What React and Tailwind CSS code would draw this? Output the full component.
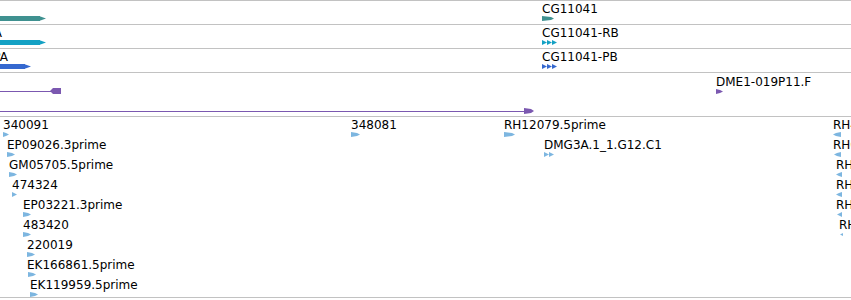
const TEAL = "#3f9190";
const CYAN = "#14a1c4";
const BLUE = "#3568cf";
const PURPLE = "#7b58b0";
const SKY = "#7db6e0";

function Bar({ width, color }) {
  return (
    <svg width={width} height="5" className="block">
      <rect x="0" y="0" width={width - 6} height="5" fill={color} />
      <polygon points={`${width - 7},0 ${width},2.5 ${width - 7},5`} fill={color} />
    </svg>
  );
}

function Flag({ width = 8, color = SKY, left = false }) {
  const pts = left
    ? `${width},0 ${width},5 3,4 0,2.5 3,1`
    : `0,0 ${width - 3},1 ${width},2.5 ${width - 3},4 0,5`;
  return (
    <svg width={width} height="5" className="block">
      <polygon points={pts} fill={color} />
    </svg>
  );
}

function Chevrons({ count, color }) {
  return (
    <svg width={count * 5 + 2} height="5" className="block">
      {Array.from({ length: count }).map((_, i) => (
        <polygon
          key={i}
          points={`${i * 5},0 ${i * 5 + 5},2.5 ${i * 5},5`}
          fill={color}
        />
      ))}
    </svg>
  );
}

// a labelled glyph placed at its genomic position on the track canvas
function Feature({ x, y, label, children }) {
  return (
    <div className="absolute flex flex-col" style={{ left: x, top: y }}>
      <span className="text-[12px] leading-[14px] whitespace-nowrap">{label}</span>
      {children}
    </div>
  );
}

// stacked EST rows, each 20px tall, indented by their start coordinate
function Stack({ items, left, className }) {
  return (
    <div className={`flex flex-col pt-px ${className}`}>
      {items.map((e, i) => (
        <div key={i} className="h-[20px] flex flex-col" style={{ paddingLeft: e.x }}>
          <span className="text-[12px] leading-[14px] whitespace-nowrap">{e.label}</span>
          <div style={{ marginLeft: e.ax - e.x }}>
            <Flag width={e.w} left={left} />
          </div>
        </div>
      ))}
    </div>
  );
}

const ests = [
  { x: 3, ax: 3, w: 6, label: "340091" },
  { x: 7, ax: 7, w: 8, label: "EP09026.3prime" },
  { x: 9, ax: 9, w: 8, label: "GM05705.5prime" },
  { x: 12, ax: 12, w: 5, label: "474324" },
  { x: 23, ax: 23, w: 8, label: "EP03221.3prime" },
  { x: 23, ax: 23, w: 8, label: "483420" },
  { x: 27, ax: 27, w: 8, label: "220019" },
  { x: 27, ax: 28, w: 8, label: "EK166861.5prime" },
  { x: 30, ax: 30, w: 8, label: "EK119959.5prime" },
];

const rightEsts = [
  { x: 0, ax: 0, w: 8, label: "RH40124.5prime" },
  { x: 0, ax: 1, w: 7, label: "RH61220.5prime" },
  { x: 3, ax: 3, w: 6, label: "RH34719.5prime" },
  { x: 3, ax: 3, w: 6, label: "RH24381.5prime" },
  { x: 3, ax: 4, w: 5, label: "RH70216.5prime" },
  { x: 6, ax: 7, w: 3, label: "RH01542.5prime" },
];

export default function App() {
  return (
    <div
      className="w-[851px] h-[300px] bg-white text-black overflow-hidden flex flex-col"
      style={{ fontFamily: '"DejaVu Sans", sans-serif' }}
    >
      {/* gene */}
      <div className="relative h-[24px] border-t border-[#c2c2c2] shrink-0">
        <div className="absolute left-0 top-[15px]">
          <Bar width={46} color={TEAL} />
        </div>
        <Feature x={542} y={1} label="CG11041">
          <Flag width={12} color={TEAL} />
        </Feature>
      </div>

      {/* transcripts */}
      <div className="relative h-[24px] border-t border-[#c2c2c2] shrink-0">
        <span className="absolute right-[849px] top-[1px] text-[12px] leading-[14px] whitespace-nowrap">
          CG11040-RA
        </span>
        <div className="absolute left-0 top-[15px]">
          <Bar width={46} color={CYAN} />
        </div>
        <Feature x={542} y={1} label="CG11041-RB">
          <Chevrons count={3} color={CYAN} />
        </Feature>
      </div>

      {/* proteins */}
      <div className="relative h-[24px] border-t border-[#c2c2c2] shrink-0">
        <span className="absolute right-[843px] top-[1px] text-[12px] leading-[14px] whitespace-nowrap">
          CG11040-PA
        </span>
        <div className="absolute left-0 top-[15px]">
          <Bar width={31} color={BLUE} />
        </div>
        <Feature x={542} y={1} label="CG11041-PB">
          <Chevrons count={3} color={BLUE} />
        </Feature>
      </div>

      {/* clones */}
      <div className="relative h-[44px] border-t border-[#c2c2c2] shrink-0">
        <div className="absolute left-0 top-[15px] flex items-center">
          <div className="w-[51px] h-px bg-[#7b58b0]" />
          <svg width="11" height="6" className="block -ml-px">
            <polygon points="3,0 11,0 11,6 3,6 0,3" fill={PURPLE} />
          </svg>
        </div>
        <div className="absolute left-0 top-[35px] flex items-center">
          <div className="w-[525px] h-px bg-[#7b58b0]" />
          <svg width="10" height="6" className="block -ml-px">
            <polygon points="0,0 7,1 10,3 7,5 0,6" fill={PURPLE} />
          </svg>
        </div>
        <Feature x={716} y={2} label="DME1-019P11.F">
          <Flag width={7} color={PURPLE} />
        </Feature>
      </div>

      {/* ESTs */}
      <div className="relative h-[182px] border-t border-b border-[#c2c2c2] shrink-0">
        <Stack items={ests} className="absolute left-0 top-0" />
        <Feature x={351} y={1} label="348081">
          <Flag width={9} />
        </Feature>
        <Feature x={504} y={1} label="RH12079.5prime">
          <Flag width={11} />
        </Feature>
        <Feature x={544} y={21} label="DMG3A.1_1.G12.C1">
          <Chevrons count={2} color={SKY} />
        </Feature>
        <Stack items={rightEsts} left className="absolute left-[833px] top-0" />
      </div>
    </div>
  );
}
